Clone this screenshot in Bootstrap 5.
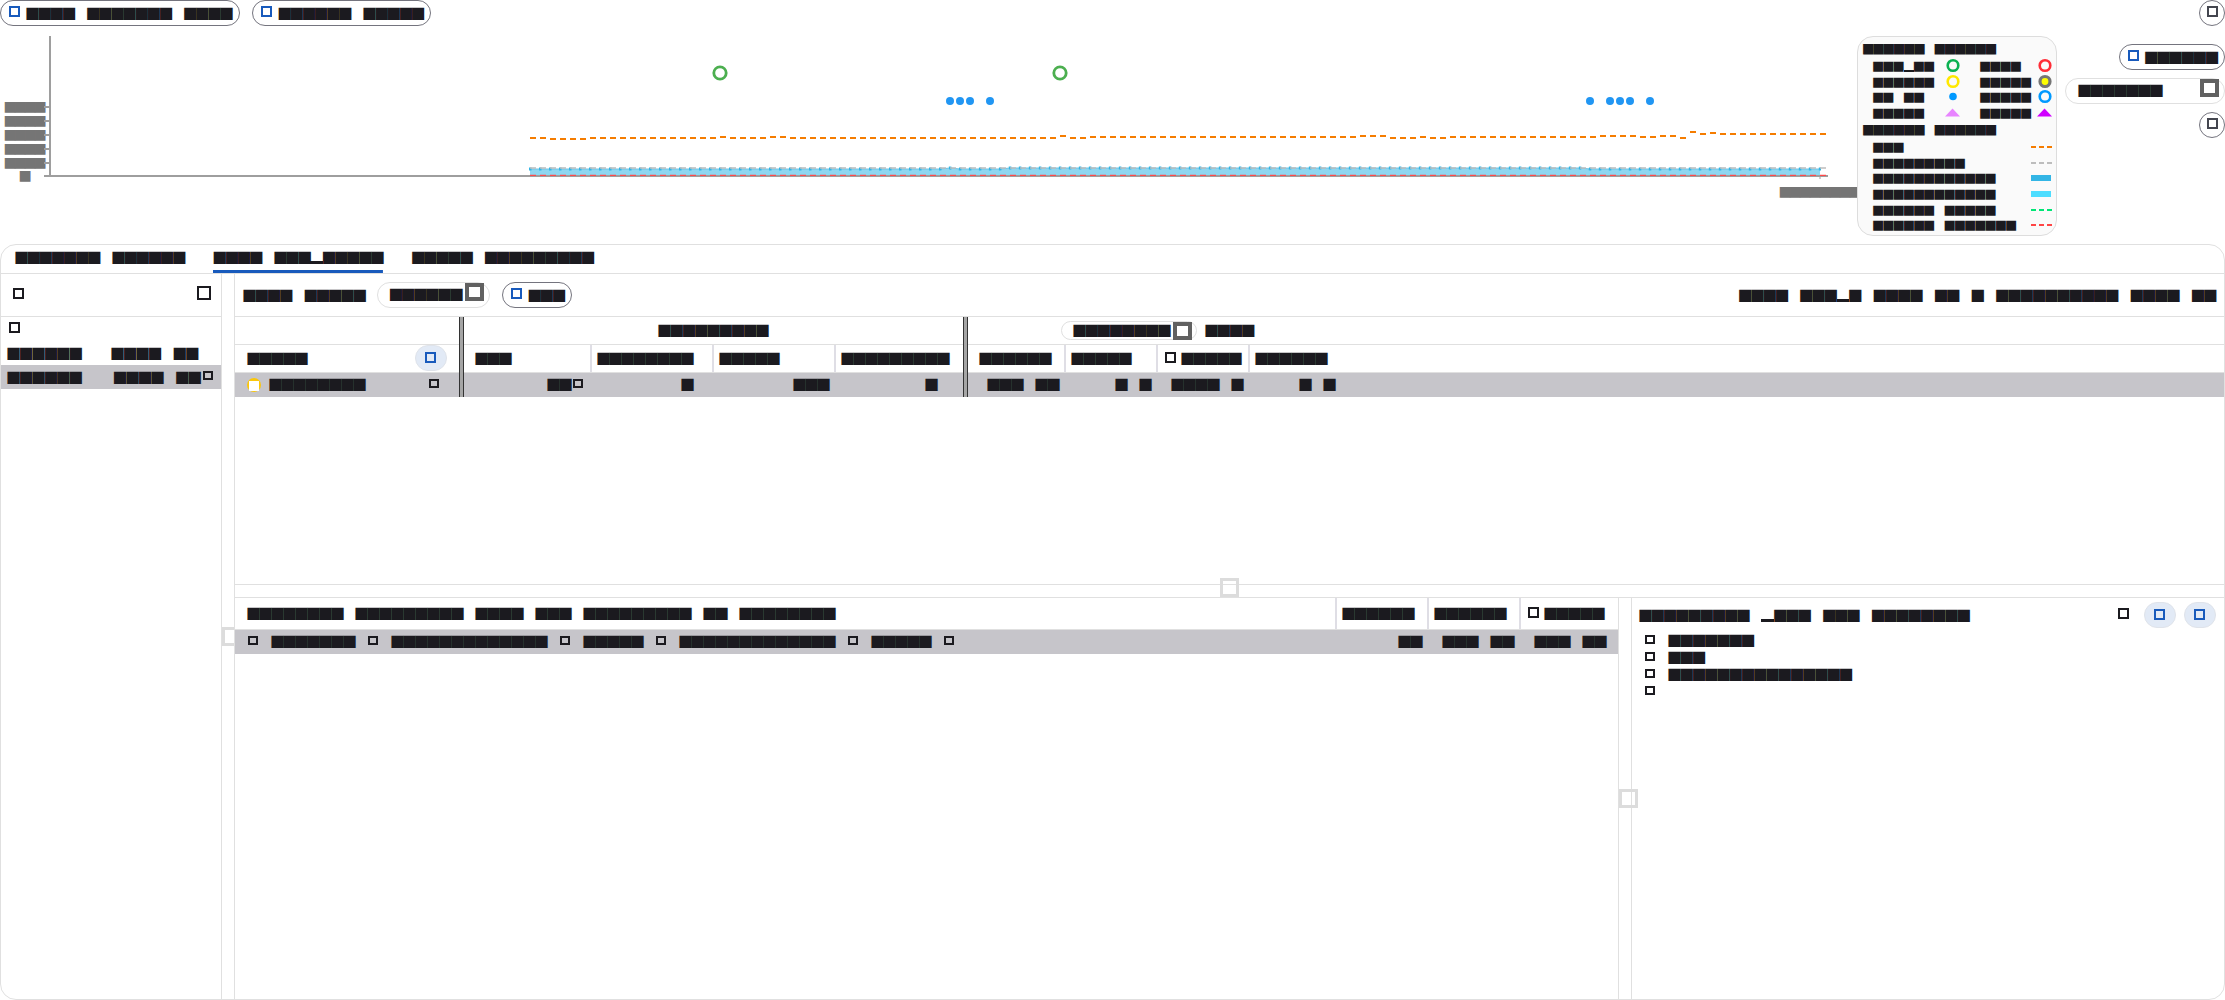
<!DOCTYPE html>
<html lang="en">
<head>
<meta charset="utf-8">
<title>Trace viewer</title>
<link href="https://cdn.jsdelivr.net/npm/bootstrap@5.3.0/dist/css/bootstrap.min.css" rel="stylesheet">
<style>
:root{--ink:#1b1a1f;--line:#e0e0e0;--blue:#185abc;--sel:#c6c5ca}
html,body{height:1000px;overflow:hidden;background:#fff}
body{font-family:"DejaVu Sans",sans-serif;font-size:13px;line-height:13px;color:var(--ink)}
.tx{display:block;height:13px;font-size:16px;line-height:13px;white-space:pre;letter-spacing:-2.99px;word-spacing:10.03px;transform:translate(-1.2px,-1px)}
.t12{letter-spacing:-3.12px}
.t122{letter-spacing:-2.875px}
.t124{letter-spacing:-2.67px}
.us{display:inline-block;width:12.2px;height:3px;overflow:hidden;background:currentColor;vertical-align:-2px;letter-spacing:0;line-height:3px;transform:translateX(1.2px)}
.bx{display:block;flex:none;width:11px;height:11px;border:2px solid currentColor}
.bx-s{width:10px;height:9px}
.bx-m{width:14px;height:14px}
.bx-l{width:19px;height:18px;border:4px solid #616161}
.bx-h{width:19px;height:19px;border:3px solid #dcdcdc;position:absolute;z-index:3}
.blue{color:var(--blue)}
.pill{height:26px;border:1px solid #74747e;border-radius:13px;padding:6px 6.5px 0 8px;gap:6px;flex:none;display:flex;align-items:flex-start;background:#fff}
.pill .bx{margin-top:-1px}
.pill-soft{border-color:var(--line);padding:5px 5px 0 11px;gap:3px}
.pill-soft .bx-l{margin-top:-5px}
.round-btn{width:26px;height:26px;border:1px solid #74747e;border-radius:50%;padding:5px 0 0 7px;color:#44464f}
.tonal{width:32px;height:26px;border-radius:13px;background:#e2eaf6;border:1px solid #dfe3ea;padding:6px 0 0 9px;color:var(--blue)}
.head{height:244px;position:relative}
.plot{position:absolute;left:0;top:0}
.plot text{font-size:14px;letter-spacing:-3.23px;fill:#757575}
.key{position:absolute;left:1857px;top:36px;width:200px;height:200px;border:1px solid #ddd;border-radius:16px;background:#fafafa;padding:6px 0 0 5px}
.key .tx{font-size:13px;letter-spacing:-2.06px;word-spacing:8.15px;height:11px;line-height:11px;transform:translate(-1px,-1px)}
.key .us{width:10.2px;height:2px;vertical-align:-2px;transform:translateX(1px)}
.kh{height:18px}
.key .kh .tx{font-size:13.5px;letter-spacing:-2.53px;word-spacing:8.46px;transform:translate(-1px,0)}
.kr{height:15.65px;display:grid;grid-template-columns:72px 35px 57px 16px;padding-left:10px}
.kr + .kh{height:18.6px}
.kr.kl{grid-template-columns:158px 24px}
.kr svg{display:block;margin-top:-3px}
.side{position:absolute;right:0;top:0;width:160px}
.panel{height:756px;border:1px solid var(--line);border-radius:16px;overflow:hidden}
.tabs{height:29px;border-bottom:1px solid var(--line);padding:6px 0 0 14px;gap:28.5px}
.tab-i{height:22px}
.tab-i.on{background:linear-gradient(var(--blue),var(--blue)) bottom/100% 3px no-repeat}
.nav-col{width:221px;border-right:1px solid var(--line)}
.gut{width:13px;border-right:1px solid var(--line);position:relative}
.bar{height:43px;border-bottom:1px solid var(--line)}
.lr{display:grid;height:24px;padding:6px 0 0 6px}
.lr1{grid-template-columns:104px 1fr}
.lr2{grid-template-columns:106.5px 89.5px 1fr}
.picked{background:var(--sel)}
.rowg{display:grid;align-items:start;align-content:start}
.g1{height:28px;border-bottom:1px solid var(--line);padding-top:7px;grid-template-columns:423px 403px 144px 1fr}
.g2{height:28px;border-bottom:1px solid var(--line);grid-template-columns:168px 60px 122px 122px 122px 138px 92px 93.5px 16.5px 74px 1fr;padding:7px 0 0 12px}
.g3{height:24px;grid-template-columns:22px 160px 118px 26px 108px 112px 132px 62px 128px 56px 128px 1fr;padding:5px 0 0 12px}
.g3 .bx,.b2 .bx{margin-top:1px}
.g2 .tonal{margin:-7px 0 -10px}
.vs{position:absolute;width:2px;top:28px;height:27px;background:#dfdee5;z-index:1}
.dbl{position:absolute;top:0;width:5px;height:80px;border:1px solid #333;border-width:0 1px;background:#a5a5a5;z-index:2}
.p1{left:224px}.p2{left:728px}.v1{left:355px}.v2{left:477px}.v3{left:599px}.v4{left:829px}.v5{left:921px}.v6{left:1013px}
.sun{width:14px;height:14px;border-radius:50%;background:#fbc70b;padding:3px 0 0 2px}
.sun i{display:block;width:10px;height:10px;background:#fff}
.tbl{height:268px;border-bottom:1px solid var(--line)}
.hgut{height:13px;border-bottom:1px solid var(--line);position:relative}
.low{width:1384px;border-right:1px solid var(--line);position:relative}
.b1{height:32px;border-bottom:1px solid var(--line);grid-template-columns:1095px 92px 94px 16px 1fr;padding:9px 0 0 12px}
.b2{height:24px;grid-template-columns:24px 96px 24px 168px 24px 72px 24px 168px 24px 72px 455px 44px 92px 1fr;padding:5px 0 0 12px}
.b2 .bx{margin-left:1px}
.low .vs{top:0;height:31px}.l1{left:1100px}.l2{left:1192px}.l3{left:1284px}
.info{padding:4px 8px 0 7px}
.it{height:17px;gap:13.5px;padding-left:5.5px}
.it .bx{margin-top:1px}
</style>
<script src="https://cdn.jsdelivr.net/npm/bootstrap@5.3.0/dist/js/bootstrap.bundle.min.js"></script>
</head>
<body>
<header class="head">
  <svg class="plot" width="1870" height="244" viewBox="0 0 1870 244">
    <path d="M530 169H940L950 168L960 169H1000L1010 168H1580L1590 169H1820V175H530Z" fill="#8fd6f0"/>
    <path d="M530 169H940L950 168L960 169H1000L1010 168H1580L1590 169H1820" stroke="#6cc3e3" fill="none"/>
    <path d="M529 169H940L950 168L960 169H1000L1010 168H1580L1590 169H1821" stroke="#33b5e5" stroke-width="3" stroke-dasharray="2.5 7.5" fill="none"/>
    <path d="M530 168H1826" stroke="#bdbdbd" stroke-width="2" stroke-dasharray="6 4" opacity=".75"/>
    <path d="M530 138H546M550 139H586M590 138H716M720 137H726M730 138H766M770 137H786M790 138H1056M1060 136H1066M1070 138H1086M1090 137H1356M1360 136H1386M1390 138H1416M1420 137H1426M1430 138H1446M1450 137H1596M1600 136H1636M1640 137H1656M1660 136H1676M1680 138H1686M1690 132H1696M1700 134H1706M1710 133H1716M1720 134H1826" stroke="#f57c00" stroke-width="2" stroke-dasharray="6 4" fill="none"/>
    <g fill="none" stroke="#4caf50" stroke-width="2.8"><circle cx="720" cy="73" r="6.2"/><circle cx="1060" cy="73" r="6.2"/></g>
    <g fill="#2196f3"><circle cx="950" cy="101" r="4"/><circle cx="960" cy="101" r="4"/><circle cx="970" cy="101" r="4"/><circle cx="990" cy="101" r="4"/><circle cx="1590" cy="101" r="4"/><circle cx="1610" cy="101" r="4"/><circle cx="1620" cy="101" r="4"/><circle cx="1630" cy="101" r="4"/><circle cx="1650" cy="101" r="4"/></g>
    <text x="3.4" y="111">■■■■</text><text x="3.4" y="125">■■■■</text><text x="3.4" y="139">■■■■</text><text x="3.4" y="153">■■■■</text><text x="3.4" y="167">■■■■</text><text x="18.6" y="180">■</text>
    <text x="1778.5" y="196">■■■■■■■■</text>
    <path d="M44 176H1828M50 36V176M44 107H50M44 121H50M44 135H50M44 149H50M44 163H50" stroke="#9e9e9e" stroke-width="2" fill="none"/>
    <path d="M1820 176V179" stroke="#9e9e9e"/>
    <path d="M530 175.3H1826" stroke="#ff4b4b" stroke-width="1.3" stroke-dasharray="6 4"/>
  </svg>
  <div class="d-flex position-relative" style="gap:12.5px">
    <div class="pill"><i class="bx blue"></i><span class="tx">■■■■ ■■■■■■■ ■■■■</span></div>
    <div class="pill"><i class="bx blue"></i><span class="tx">■■■■■■ ■■■■■</span></div>
  </div>
  <section class="key">
    <div class="kh"><span class="tx">■■■■■■ ■■■■■■</span></div>
    <div class="kr"><span class="tx">■■■<span class="us">_</span>■■</span><svg width="16" height="15"><circle cx="8" cy="7.5" r="5.3" fill="none" stroke="#0bb152" stroke-width="2.6"/></svg><span class="tx">■■■■</span><svg width="16" height="15"><circle cx="8" cy="7.5" r="5.3" fill="none" stroke="#ff2d37" stroke-width="2.6"/></svg></div>
    <div class="kr"><span class="tx">■■■■■■</span><svg width="16" height="15"><circle cx="8" cy="7.5" r="5.3" fill="none" stroke="#ffe800" stroke-width="2.6"/></svg><span class="tx">■■■■■</span><svg width="16" height="15"><circle cx="8" cy="7.5" r="5" fill="#ff0" stroke="#757575" stroke-width="3.2"/></svg></div>
    <div class="kr"><span class="tx">■■ ■■</span><svg width="16" height="15"><circle cx="8" cy="7.5" r="3.8" fill="#09f"/></svg><span class="tx">■■■■■</span><svg width="16" height="15"><circle cx="8" cy="7.5" r="5.3" fill="none" stroke="#09f" stroke-width="2.6"/></svg></div>
    <div class="kr"><span class="tx">■■■■■</span><svg width="16" height="15"><path d="M0 11.5L7.5 3.5L15 11.5Z" fill="#e884ff"/></svg><span class="tx">■■■■■</span><svg width="16" height="15"><path d="M0 11.5L7.5 3.5L15 11.5Z" fill="#d000ff"/></svg></div>
    <div class="kh"><span class="tx">■■■■■■ ■■■■■■</span></div>
    <div class="kr kl"><span class="tx">■■■</span><svg width="22" height="15"><path d="M0 8H22" stroke="#f57c00" stroke-width="2" stroke-dasharray="5 3"/></svg></div>
    <div class="kr kl"><span class="tx">■■■■■■■■■</span><svg width="22" height="15"><path d="M0 8H22" stroke="#bdbdbd" stroke-width="2" stroke-dasharray="5 3"/></svg></div>
    <div class="kr kl"><span class="tx">■■■■■■■■■■■■</span><svg width="22" height="15"><path d="M0 8H20" stroke="#33b5e5" stroke-width="6"/></svg></div>
    <div class="kr kl"><span class="tx">■■■■■■■■■■■■</span><svg width="22" height="15"><path d="M0 8H20" stroke="#4dddff" stroke-width="6"/></svg></div>
    <div class="kr kl"><span class="tx">■■■■■■ ■■■■■</span><svg width="22" height="15"><path d="M0 8H22" stroke="#00e676" stroke-width="2" stroke-dasharray="5 3"/></svg></div>
    <div class="kr kl"><span class="tx">■■■■■■ ■■■■■■■</span><svg width="22" height="15"><path d="M0 8H22" stroke="#ff4545" stroke-width="2" stroke-dasharray="5 3"/></svg></div>
  </section>
  <div class="side d-flex flex-column align-items-end">
    <div class="round-btn"><i class="bx"></i></div>
    <div class="pill" style="margin-top:18px"><i class="bx blue"></i><span class="tx">■■■■■■</span></div>
    <div class="pill pill-soft w-100 justify-content-between" style="margin-top:8px;padding-left:12px"><span class="tx t12">■■■■■■■</span><i class="bx bx-l"></i></div>
    <div class="round-btn" style="margin-top:8px"><i class="bx"></i></div>
  </div>
</header>
<main class="panel d-flex flex-column">
  <nav class="tabs d-flex flex-none">
    <div class="tab-i"><span class="tx">■■■■■■■ ■■■■■■</span></div>
    <div class="tab-i on"><span class="tx">■■■■ ■■■<span class="us">_</span>■■■■■</span></div>
    <div class="tab-i"><span class="tx">■■■■■ ■■■■■■■■■</span></div>
  </nav>
  <div class="d-flex flex-grow-1">
    <aside class="nav-col">
      <div class="bar d-flex justify-content-between" style="padding:12px 10px 0 12px"><i class="bx" style="margin-top:2px"></i><i class="bx bx-m"></i></div>
      <div style="height:24px;padding:5px 0 0 8px"><i class="bx"></i></div>
      <div class="lr lr1"><span class="tx t124">■■■■■■</span><span class="tx t124">■■■■ ■■</span></div>
      <div class="lr lr2 picked"><span class="tx t124">■■■■■■</span><span class="tx t124">■■■■ ■■</span><i class="bx bx-s"></i></div>
    </aside>
    <div class="gut overflow-hidden"><i class="bx-h" style="left:0;top:353px"></i></div>
    <section class="flex-grow-1">
      <div class="bar d-flex" style="padding:8px 8px 0 8px">
        <span class="tx t122" style="margin:7px 12px 0 0">■■■■ ■■■■■</span>
        <div class="pill pill-soft" style="margin-right:12px"><span class="tx">■■■■■■</span><i class="bx bx-l"></i></div>
        <div class="pill"><i class="bx blue"></i><span class="tx">■■■</span></div>
        <span class="tx t122 ms-auto" style="margin-top:7px">■■■■ ■■■<span class="us">_</span>■ ■■■■ ■■ ■ ■■■■■■■■■■ ■■■■ ■■</span>
      </div>
      <div class="tbl position-relative">
        <i class="dbl p1"></i><i class="dbl p2"></i><i class="vs v1"></i><i class="vs v2"></i><i class="vs v3"></i><i class="vs v4"></i><i class="vs v5"></i><i class="vs v6"></i>
        <div class="rowg g1"><span></span><span class="tx t122">■■■■■■■■■</span><div class="pill pill-soft" style="height:19px;width:136px;margin:-3px 0;padding-top:2px"><span class="tx">■■■■■■■■</span><i class="bx bx-l" style="margin-top:-2px"></i></div><span class="tx t122">■■■■</span></div>
        <div class="rowg g2"><span class="tx t12">■■■■■</span><div class="tonal"><i class="bx"></i></div><span class="tx t12">■■■</span><span class="tx t12">■■■■■■■■</span><span class="tx t12">■■■■■</span><span class="tx t12">■■■■■■■■■</span><span class="tx t12">■■■■■■</span><span class="tx t12">■■■■■</span><i class="bx"></i><span class="tx t12">■■■■■</span><span class="tx t12">■■■■■■</span></div>
        <div class="rowg g3 picked"><div class="sun"><i></i></div><span class="tx t12">■■■■■■■■</span><i class="bx bx-s"></i><span class="tx t12">■■</span><i class="bx bx-s"></i><span class="tx t12">■</span><span class="tx t12">■■■</span><span class="tx t12">■</span><span class="tx t12">■■■ ■■</span><span class="tx t12">■ ■</span><span class="tx t12">■■■■ ■</span><span class="tx t12">■ ■</span></div>
      </div>
      <div class="hgut"><i class="bx-h" style="left:985px;top:-7px"></i></div>
      <div class="d-flex" style="height:402px">
        <div class="low">
          <i class="vs l1"></i><i class="vs l2"></i><i class="vs l3"></i>
          <div class="rowg b1"><span class="tx t12">■■■■■■■■ ■■■■■■■■■ ■■■■ ■■■ ■■■■■■■■■ ■■ ■■■■■■■■</span><span class="tx t12">■■■■■■</span><span class="tx t12">■■■■■■</span><i class="bx"></i><span class="tx t12">■■■■■</span></div>
          <div class="rowg b2 picked"><i class="bx bx-s"></i><span class="tx t12">■■■■■■■</span><i class="bx bx-s"></i><span class="tx t12">■■■■■■■■■■■■■</span><i class="bx bx-s"></i><span class="tx t12">■■■■■</span><i class="bx bx-s"></i><span class="tx t12">■■■■■■■■■■■■■</span><i class="bx bx-s"></i><span class="tx t12">■■■■■</span><i class="bx bx-s"></i><span class="tx t12">■■</span><span class="tx t12">■■■ ■■</span><span class="tx t12">■■■ ■■</span></div>
        </div>
        <div class="gut"><i class="bx-h" style="left:0;top:191px"></i></div>
        <div class="info flex-grow-1">
          <div class="d-flex" style="height:32px">
            <span class="tx t122" style="margin-top:7px">■■■■■■■■■ <span class="us">_</span>■■■ ■■■ ■■■■■■■■</span>
            <i class="bx ms-auto" style="margin:6px 15px 0 0"></i>
            <div class="tonal" style="margin-right:8px"><i class="bx"></i></div><div class="tonal"><i class="bx"></i></div>
          </div>
          <div class="it d-flex"><i class="bx bx-s"></i><span class="tx t122">■■■■■■■</span></div>
          <div class="it d-flex"><i class="bx bx-s"></i><span class="tx t122">■■■</span></div>
          <div class="it d-flex"><i class="bx bx-s"></i><span class="tx t122">■■■■■■■■■■■■■■■</span></div>
          <div class="it d-flex"><i class="bx bx-s"></i></div>
        </div>
      </div>
    </section>
  </div>
</main>
</body>
</html>
